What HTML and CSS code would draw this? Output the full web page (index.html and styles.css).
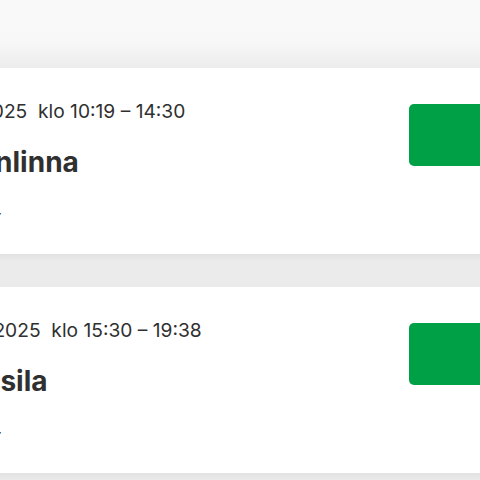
FILE: index.html
```html
<!DOCTYPE html>
<html lang="fi">
<head>
<meta charset="utf-8">
<link rel="stylesheet" href="styles.css">
</head>
<body>
<div class="page">
  <div class="topbar"></div>
  <div class="list">
    <div class="card">
      <div class="info">
        <div class="when">
          <svg class="ico" viewBox="0 0 18 18" width="18" height="18"><circle cx="9" cy="9" r="7.5" fill="none" stroke="#303030" stroke-width="1.5"/><path d="M9 4.5V9l3 2" fill="none" stroke="#303030" stroke-width="1.5"/></svg>
          <span>ti 15.4.2025&nbsp; klo 10:19 – 14:30</span>
        </div>
        <div class="route">Hämeenlinna</div>
        <div class="meta">Lähtöraide 4</div>
      </div>
      <div class="btn"></div>
    </div>
    <div class="sep"></div>
    <div class="card">
      <div class="info">
        <div class="when">
          <svg class="ico" viewBox="0 0 18 18" width="18" height="18"><circle cx="9" cy="9" r="7.5" fill="none" stroke="#303030" stroke-width="1.5"/><path d="M9 4.5V9l3 2" fill="none" stroke="#303030" stroke-width="1.5"/></svg>
          <span>ma 11.4.2025&nbsp; klo 15:30 – 19:38</span>
        </div>
        <div class="route">Pori-Pasila</div>
        <div class="meta">Lähtöraide 4</div>
      </div>
      <div class="btn"></div>
    </div>
    <div class="sep"></div>
  </div>
</div>
</body>
</html>
```
FILE: styles.css
```css
html, body {
  margin: 0;
  padding: 0;
  width: 480px;
  height: 480px;
  overflow: hidden;
  background: #ececec;
  font-family: Inter, "Noto Sans", sans-serif;
  color: #303030;
}
.page {
  width: 480px;
  overflow: hidden;
}
.topbar {
  height: 68px;
  background: linear-gradient(#f9f9f9 0, #f8f8f8 40px, #ececec 68px);
}
.card {
  background: #fff;
  height: 186px;
  display: flex;
  justify-content: space-between;
  margin-left: -101px;
  margin-right: -40px;
}
.info {
  padding-top: 31px;
}
.when {
  display: flex;
  align-items: center;
  gap: 5px;
  font-size: 19.2px;
  line-height: 24px;
  white-space: nowrap;
}
.ico {
  flex: none;
}
.route {
  font-size: 28px;
  font-weight: 700;
  line-height: 34px;
  margin-top: 22px;
  white-space: nowrap;
}
.meta {
  font-size: 17.3px;
  line-height: 20px;
  margin-top: 22px;
  white-space: nowrap;
}
.btn {
  width: 111px;
  height: 62px;
  margin-top: 36px;
  background: #00a046;
  border-radius: 5px;
}
.sep {
  height: 33px;
  background: linear-gradient(#e2e2e2 0, #ebebeb 8px, #ebebeb 100%);
}
```
